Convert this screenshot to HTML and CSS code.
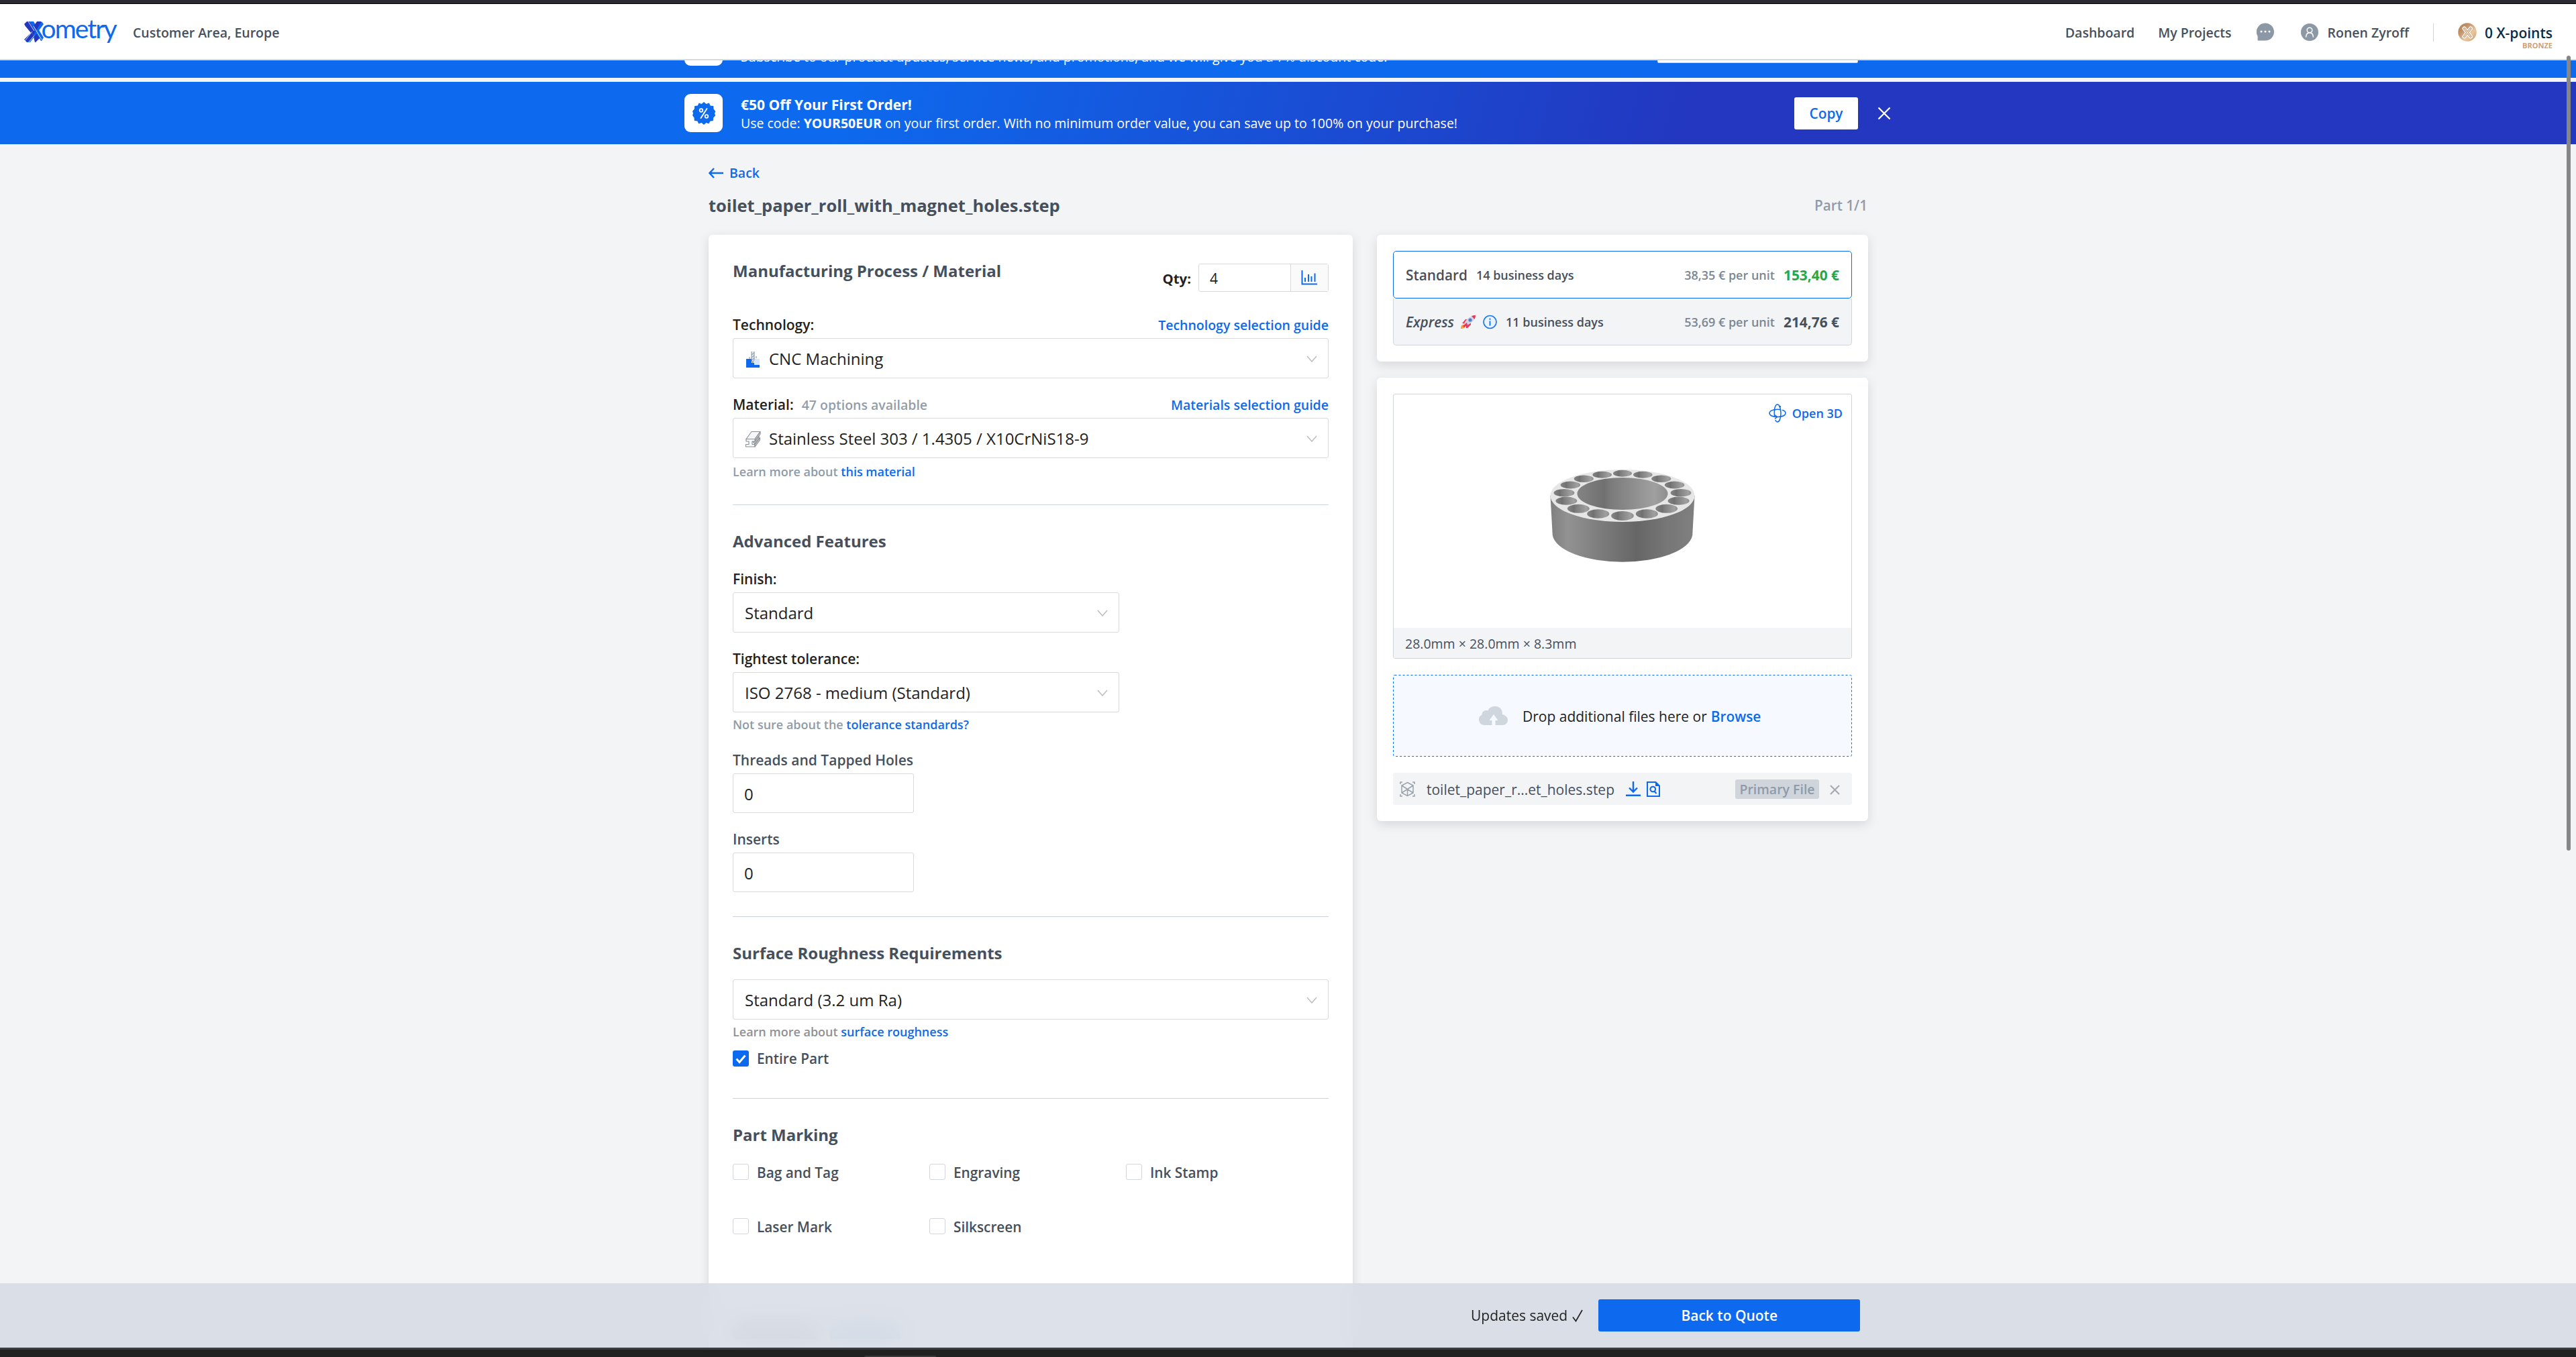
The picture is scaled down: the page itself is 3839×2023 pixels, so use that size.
FILE: index.html
```
<!DOCTYPE html>
<html lang="en">
<head>
<meta charset="utf-8">
<title>Xometry – Customer Area, Europe</title>
<link rel="stylesheet" href="styles.css">
</head>
<body>
<svg width="0" height="0" class="defs">
  <symbol id="chevron" viewBox="0 0 16 10"><path d="M1 1l7 8 7-8" fill="none" stroke="#bfbfbf" stroke-width="1.6"/></symbol>
</svg>
<div class="app">
  <div class="chrome-top"></div>
  <header class="header">
    <svg class="logo" width="144" height="40" viewBox="0 0 144 40">
      <path d="M2 7l3-4h7l5 8-5 8z" fill="#2337c0"/>
      <path d="M1 5L5 1h4l16 24-7 7h-1L14 20z" fill="#2337c0"/>
      <path d="M9 1h6l15 24-3 5h-1z" fill="#0d6aee"/>
      <path d="M29 5l-3-4h-6l-5 7 4 6z" fill="#2337c0"/>
      <path d="M30 5L27 1 9 31h-4l5 1 5-7z" fill="#0d6aee"/>
      <path d="M12 17l4 6-7 9H5l-4-4z" fill="#2337c0"/>
      <path d="M16 23L9 32H5" fill="#0d6aee"/>
      <path d="M16 22l-8 10M7 1l9 14M15 8l12 20M13 16l-11 14" stroke="#fff" stroke-width=".8" fill="none"/>
      <text class="logo-text" x="26.500" y="26" textLength="113" lengthAdjust="spacing">ometry</text>
    </svg>
    <span class="area">Customer Area, Europe</span>
    <nav class="nav">
      <span class="nav-dash">Dashboard</span>
      <span class="nav-proj">My Projects</span>
      <svg class="nav-chat" width="26" height="27" viewBox="0 0 26 27"><path d="M13 .5a13 13 0 1 1 0 26H2.500c-1 0-1-1-.9-2V20A13 13 0 0 1 13 .5z" fill="#8c98a6"/><g fill="#fff"><circle cx="7" cy="13" r="1.500"/><circle cx="13" cy="13" r="1.500"/><circle cx="19" cy="13" r="1.500"/></g></svg>
      <svg class="nav-user" width="26" height="26" viewBox="0 0 26 26"><circle cx="13" cy="13" r="13" fill="#8c98a6"/><circle cx="13" cy="10" r="3.800" fill="none" stroke="#fff" stroke-width="1.500"/><path d="M7.500 20.500c.3-4.500 2.500-6.700 5.500-6.700s5.200 2.200 5.500 6.700" fill="none" stroke="#fff" stroke-width="1.500"/></svg>
      <span class="nav-name">Ronen Zyroff</span>
      <span class="nav-sep"></span>
      <svg class="coin" width="28" height="28" viewBox="0 0 28 28">
        <defs><linearGradient id="bz" x1="0" y1="0" x2="1" y2="1"><stop offset="0" stop-color="#b98355"/><stop offset=".3" stop-color="#c08f66"/><stop offset=".65" stop-color="#eac69c"/><stop offset="1" stop-color="#c89a6c"/></linearGradient></defs>
        <circle cx="14" cy="14" r="13.700" fill="url(#bz)"/>
        <path d="M9.500 8.500l9.500 12M19 8.500l-9.500 12" stroke="#fff" stroke-width="6" stroke-linecap="round"/>
        <path d="M9.500 8.500l9.500 12M19 8.500l-9.500 12" stroke="#cf9f75" stroke-width="3.400" stroke-linecap="round"/>
        <path d="M9.500 8.500l9.500 12M19 8.500l-9.500 12" stroke="#fff" stroke-width="1"/>
      </svg>
      <span class="points">0 X-points<small>BRONZE</small></span>
    </nav>
  </header>

  <main class="scroll">
    <section class="banner banner-news">
      <div class="banner-icon"></div>
      <div class="banner-text"><span>Subscribe to our product updates, service news, and promotions, and we will give you a 7% discount code!</span></div>
      <div class="banner-input"></div>
    </section>
    <section class="banner banner-promo">
      <div class="banner-icon">
        <svg width="34" height="36" viewBox="0 0 34 36"><path d="M17 1l3.500 3 4.200-1.500 2 4 4.500.6.3 4.500 3 3.400L33 18l1.200 3.300-3 3.200-.4 4.400-4.500.8-2 3.900L20.500 32 17 35l-3.500-3-4.200 1.600-2-4-4.500-.7-.3-4.500L0 21l1-3-1-3.200 2.800-3.300.4-4.400 4.500-.7 1.900-4L13.500 4z" fill="#0d6aee"/><path d="M21.500 11L12.500 25" stroke="#fff" stroke-width="1.900" stroke-linecap="round"/><circle cx="13" cy="13.500" r="2.300" fill="none" stroke="#fff" stroke-width="1.700"/><circle cx="21" cy="22.500" r="2.300" fill="none" stroke="#fff" stroke-width="1.700"/></svg>
      </div>
      <div class="banner-text"><b>€50 Off Your First Order!</b><span>Use code: <strong>YOUR50EUR</strong> on your first order. With no minimum order value, you can save up to 100% on your purchase!</span></div>
      <button class="copy">Copy</button>
      <svg class="banner-close" width="20" height="20" viewBox="0 0 20 20"><path d="M1.500 1.500l17 17M18.500 1.500l-17 17" stroke="#fff" stroke-width="2.300"/></svg>
    </section>

    <div class="page">
      <a class="back"><svg width="22" height="16" viewBox="0 0 22 16"><path d="M8 1L1.500 8 8 15M1.500 8H22" fill="none" stroke="#0d6aee" stroke-width="2.400"/></svg>Back</a>
      <div class="title-row"><h1>toilet_paper_roll_with_magnet_holes.step</h1><span class="part-no">Part 1/1</span></div>

      <div class="columns">
        <section class="card form">
          <div class="form-head">
            <h2>Manufacturing Process / Material</h2>
            <div class="qty"><span class="qty-label">Qty:</span><div class="qty-box"><span class="qty-val">4</span><span class="qty-btn"><svg width="24" height="22" viewBox="0 0 24 22"><path d="M1.500 0v20.500H24" fill="none" stroke="#0d6aee" stroke-width="2"/><path d="M6 17v-6M11 17V6M15.500 17V9M20.500 17V4.500" stroke="#0d6aee" stroke-width="2"/></svg></span></div></div>
          </div>

          <div class="row m34"><span class="label dark">Technology:</span><a class="guide">Technology selection guide</a></div>
          <div class="select">
            <svg class="opt-icon" width="24" height="26" viewBox="0 0 24 26"><path d="M2 12h8v6h6v-6h6v13H2z" fill="#0d6aee"/><path d="M14 12h8v9h-8z" fill="#d5e6fd"/><path d="M2 21h20v3.500H2z" fill="#0d6aee"/><path d="M10 1h4v12l-2 5-2-5z" fill="#e3e8ee"/><path d="M10 1v12l2 5 2-5V1M10 6l4-3M10 10l4-3M10 14l4-3M7 9v3M17 8v3" fill="none" stroke="#7f8fa3" stroke-width="1"/></svg>
            <span>CNC Machining</span><svg class="chev" width="16" height="10"><use href="#chevron"/></svg></div>

          <div class="row m24"><span class="label dark">Material:<em>47 options available</em></span><a class="guide">Materials selection guide</a></div>
          <div class="select">
            <svg class="opt-icon" width="24" height="26" viewBox="0 0 24 26"><g fill="#f6f7f8" stroke="#8b8e92" stroke-width="1.100" stroke-linejoin="round"><path d="M10 1.500h13l-8 11H2z"/><path d="M23 1.500V5l-8 11v-3.500z" fill="#c9ccce"/><path d="M11 15.500l4 .5 6-8v4l-6 8z" fill="#bcbfc1"/><path d="M2 12.500h13V16h-4v4.500h4V24H1.500v-3.500H6V16H2z"/><path d="M15 20.500l7.500-10V14L15 24z" fill="#c9ccce"/></g></svg>
            <span>Stainless Steel 303 / 1.4305 / X10CrNiS18-9</span><svg class="chev" width="16" height="10"><use href="#chevron"/></svg></div>
          <p class="hint m5">Learn more about <a>this material</a></p>
          <hr class="m34">

          <h2 class="m39">Advanced Features</h2>
          <div class="row m26"><span class="label dark">Finish:</span></div>
          <div class="select half"><span>Standard</span><svg class="chev" width="16" height="10"><use href="#chevron"/></svg></div>
          <div class="row m24"><span class="label dark">Tightest tolerance:</span></div>
          <div class="select half"><span>ISO 2768 - medium (Standard)</span><svg class="chev" width="16" height="10"><use href="#chevron"/></svg></div>
          <p class="hint m3">Not sure about the <a>tolerance standards?</a></p>
          <div class="row m23"><span class="label">Threads and Tapped Holes</span></div>
          <div class="input">0</div>
          <div class="row m24"><span class="label">Inserts</span></div>
          <div class="input">0</div>
          <hr class="m36">

          <h2 class="m39">Surface Roughness Requirements</h2>
          <div class="select m24"><span>Standard (3.2 um Ra)</span><svg class="chev" width="16" height="10"><use href="#chevron"/></svg></div>
          <p class="hint m3 neutral">Learn more about <a>surface roughness</a></p>
          <div class="check entire"><i class="box on"><svg width="24" height="24" viewBox="0 0 24 24"><path d="M5.500 12.500l4.500 5 8.500-10" fill="none" stroke="#fff" stroke-width="3"/></svg></i>Entire Part</div>
          <hr class="m44">

          <h2 class="m39">Part Marking</h2>
          <div class="checks">
            <div class="check"><i class="box"></i>Bag and Tag</div>
            <div class="check"><i class="box"></i>Engraving</div>
            <div class="check"><i class="box"></i>Ink Stamp</div>
            <div class="check"><i class="box"></i>Laser Mark</div>
            <div class="check"><i class="box"></i>Silkscreen</div>
          </div>
          <div class="below"><i class="below-a"></i><i class="below-b"></i></div>
        </section>

        <aside class="side">
          <section class="card side-card">
            <div class="speed active"><span class="speed-name">Standard</span><span class="days">14 business days</span><span class="unit">38,35 € per unit</span><b>153,40 €</b></div>
            <div class="speed"><span class="speed-name express">Express</span>
              <svg class="rocket" width="24" height="22" viewBox="0 0 24 22"><path d="M1 21c0-4 1-6 4-6l3 2c-.5 3-3 4-7 4z" fill="#f8a23c"/><path d="M3 13l5-6h5l-4 7z" fill="#e8365f"/><path d="M9 20l-1-6 8-5v6l-5 5z" fill="#e8365f"/><path d="M6 13c3-6 8-11 17-12-1 7-6 12-13 15z" fill="#cfd6e0"/><path d="M17 2c2-.8 4-1 6-1-.1 2-.6 4-1.500 6z" fill="#f0315b"/><circle cx="15" cy="8" r="2.600" fill="#4f7fd0"/><path d="M4 17l6-5 1 3-5 4z" fill="#ef2f5c"/></svg>
              <svg class="info" width="21" height="22" viewBox="0 0 21 22"><circle cx="10.500" cy="11" r="9.500" fill="#e8f3ff" stroke="#1677ee" stroke-width="1.700"/><path d="M10.500 9.500v7M10.500 5.500v2.200" stroke="#1677ee" stroke-width="1.900"/></svg>
              <span class="days">11 business days</span><span class="unit">53,69 € per unit</span><b>214,76 €</b></div>
          </section>

          <section class="card side-card">
            <div class="viewer">
              <div class="viewer-body">
                <svg class="part" width="220" height="148" viewBox="0 0 220 148">
                  <defs>
                    <linearGradient id="wall"><stop offset="0" stop-color="#7f7f7f"/><stop offset=".12" stop-color="#929292"/><stop offset=".35" stop-color="#7c7c7c"/><stop offset=".6" stop-color="#666"/><stop offset=".8" stop-color="#767676"/><stop offset="1" stop-color="#808080"/></linearGradient>
                    <linearGradient id="bore"><stop offset="0" stop-color="#848484"/><stop offset=".3" stop-color="#707070"/><stop offset=".36" stop-color="#7a7a7a"/><stop offset=".85" stop-color="#a0a0a0"/><stop offset="1" stop-color="#8e8e8e"/></linearGradient>
                  </defs>
                  <path d="M2.500 42l3.300 59a104.500 43 0 0 0 208.400 0l3.300-59z" fill="url(#wall)"/>
                  <ellipse cx="110" cy="42" rx="107.500" ry="39" fill="#e6e6e6"/>
                  <ellipse cx="110" cy="39" rx="67.500" ry="24" fill="url(#bore)"/>
                  <g fill="url(#bore)">
                    <ellipse cx="110" cy="8.700" rx="14" ry="5"/>
                    <ellipse cx="140.300" cy="10.700" rx="14.300" ry="5"/><ellipse cx="79.700" cy="10.700" rx="14.300" ry="5"/>
                    <ellipse cx="167.700" cy="16.700" rx="14.600" ry="5.200"/><ellipse cx="52.300" cy="16.700" rx="14.600" ry="5.200"/>
                    <ellipse cx="187.600" cy="26" rx="14.800" ry="5.400"/><ellipse cx="32.400" cy="26" rx="14.800" ry="5.400"/>
                    <ellipse cx="197" cy="37.700" rx="15.400" ry="5.800"/><ellipse cx="23" cy="37.700" rx="15.400" ry="5.800"/>
                    <ellipse cx="193.600" cy="49.700" rx="16" ry="6.100"/><ellipse cx="26.400" cy="49.700" rx="16" ry="6.100"/>
                    <ellipse cx="175.700" cy="61.300" rx="16.400" ry="6.500"/><ellipse cx="44.300" cy="61.300" rx="16.400" ry="6.500"/>
                    <ellipse cx="146.300" cy="69" rx="16.600" ry="6.800"/><ellipse cx="73.700" cy="69" rx="16.600" ry="6.800"/>
                    <ellipse cx="110" cy="72" rx="16.800" ry="6.900"/>
                  </g>
                </svg>
                <a class="open3d"><svg width="26" height="28" viewBox="0 0 26 28" fill="none" stroke="#0d6aee" stroke-width="1.500"><path d="M8.500 8.700C4 9.500 1 11.500 1 14c0 3.200 5 5.500 12 5.500S25 17.200 25 14c0-2.300-2-4-5-4.800"/><path d="M9 19.500C8 17 8 10 9 6c.8-3.500 2.500-5 4-5 3 0 5 6 5 13s-2 13-5 13c-1.300 0-2.400-1-3.200-3"/><path d="M8 9.200c3-1 7-1 9.500-.5M15.500 5l2.500-1.500"/><path d="M9 16.500l3.500 3L9 22.500"/></svg>Open 3D</a>
              </div>
              <div class="viewer-dims">28.0mm × 28.0mm × 8.3mm</div>
            </div>
            <div class="drop">
              <svg class="dash" width="684" height="122"><rect x=".5" y=".5" width="683" height="121" rx="2"/></svg>
              <svg width="43" height="28" viewBox="0 0 43 28"><path d="M8 28a8.200 8.200 0 0 1-3.500-15.500C4.500 8 9 5 13.500 6.500 16-2 31-2 34 6c.8 2 1 4 .8 6C40 13 43 17 43 20.500 43 25 39.500 28 35.500 28H24.500v-7h4L22 12l-6.500 9h4v7z" fill="#d0d6de"/></svg>
              <span>Drop additional files here or</span><a>Browse</a>
            </div>
            <div class="file">
              <svg class="f-cube" width="23" height="23" viewBox="0 0 23 23" fill="none" stroke="#98a3af" stroke-width="1.500"><path d="M11.500 1.500L20 6v11l-8.500 4.500L3 17V6zM3 6l8.500 5.500L20 6M11.500 11.500v10M3 17l8.500-5.500L20 17M1 4V1h3M19 1h3v3M22 19v3h-3M4 22H1v-3"/></svg>
              <span class="f-name">toilet_paper_r...et_holes.step</span>
              <svg class="f-down" width="22" height="23" viewBox="0 0 22 23" fill="none" stroke="#0d6aee" stroke-width="2.400"><path d="M11 0v15M5 9.500l6 6 6-6M0 20.800h22"/></svg>
              <svg class="f-doc" width="20" height="23" viewBox="0 0 20 23" fill="none" stroke="#0d6aee" stroke-width="2.100"><path d="M1 1h12.500L19 6.500V22H1z"/><path d="M13 1l6 6h-6z" fill="#0d6aee" stroke="none"/><circle cx="9.300" cy="11.500" r="3.800"/><path d="M11.500 14.500l3 3.500"/></svg>
              <span class="primary">Primary File</span>
              <svg class="f-x" width="15" height="15" viewBox="0 0 15 15"><path d="M1 1l13 13M14 1L1 14" stroke="#a7abb0" stroke-width="2.200"/></svg>
            </div>
          </section>
        </aside>
      </div>
    </div>

    <div class="footer"><span>Updates saved</span><svg width="16" height="19" viewBox="0 0 16 19"><path d="M1 11.500l4.500 6L15 1" fill="none" stroke="#222" stroke-width="1.700"/></svg><button>Back to Quote</button></div>
  </main>
  <div class="chrome-bottom"><i></i></div>
  <div class="scrollbar"></div>
</div>
</body>
</html>
```
FILE: styles.css
```
* { box-sizing: border-box; }
body { margin: 0; font-family: "Open Sans", "Noto Sans", sans-serif; font-size: 21px; line-height: 30px; color: #46505c; background: #f3f4f6; }
h1, h2, p { margin: 0; }
svg { display: block; flex: none; }
i { font-style: normal; }
a { color: #0d6aee; font-weight: 600; }
button { border: 0; font: inherit; font-weight: 600; padding: 0; }
.defs { position: absolute; }

.app { position: relative; display: flex; flex-direction: column; width: 3839px; height: 2023px; overflow: hidden; }
.chrome-top { height: 6px; background: #2b2a33; border-bottom: 1px solid #000; flex: none; }

.header { display: flex; align-items: center; height: 84px; padding: 0 35px; background: #fff; border-bottom: 2px solid #d6dadd; flex: none; font-size: 19.5px; font-weight: 600; }
.logo { margin-top: 8px; overflow: visible; }
.logo-text { font: 400 39px Lato, sans-serif; fill: #0d6aee; }
.area { margin-left: 19px; margin-top: 3px; }
.nav { display: flex; align-items: center; margin-left: auto; margin-top: 3px; }
.nav-proj { margin-left: 35px; }
.nav-chat { margin-left: 37px; margin-top: -2px; }
.nav-user { margin-left: 40px; margin-top: -2px; }
.nav-name { margin-left: 14px; }
.nav-sep { width: 1px; height: 27px; margin: -1px 36px 0 36px; background: #cfd3d8; }
.coin { margin-top: -2px; }
.points { position: relative; margin-left: 12px; font-size: 21px; color: #0b2c47; }
.points small { position: absolute; right: 0; top: 27px; font-size: 11px; line-height: 14px; font-weight: 700; color: #cf9f75; }

.scroll { position: relative; flex: 1; min-height: 0; overflow: hidden; }
.banner { display: flex; align-items: center; height: 93px; padding-left: 1020px; color: #fff; background: #0d6aee; }
.banner-news { margin-top: -67px; margin-bottom: 6px; }
.banner-promo { background: linear-gradient(106deg, #0d6aee 32.5%, #2337c0 65.5%); }
.banner-icon { display: flex; align-items: center; justify-content: center; width: 57px; height: 57px; border-radius: 9px; background: #fff; }
.banner-text { display: flex; flex-direction: column; justify-content: flex-end; width: 1366px; height: 54px; margin-left: 27px; margin-top: 2px; font-size: 19.5px; line-height: 27px; }
.banner-text b { font-size: 21px; }
.banner-input { width: 299px; height: 48px; background: #fff; border: 1px solid #c9ced4; border-radius: 2px; }
.banner-promo .copy { width: 95px; height: 48px; margin-left: 204px; border-radius: 3px; background: #fff; color: #0d6aee; font-size: 20.8px; }
.banner-close { margin-left: 29px; }

.page { padding-top: 28px; margin-left: 1056px; width: 1728px; }
.back { display: flex; align-items: center; gap: 9px; font-size: 19.5px; height: 30px; }
.title-row { display: flex; justify-content: space-between; margin-top: 18px; height: 30px; }
h1 { font-size: 25.5px; line-height: 30px; font-weight: 700; }
.part-no { color: #909ba8; font-weight: 600; font-size: 20.7px; margin-right: 1px; }
.columns { display: flex; align-items: flex-start; gap: 36px; margin-top: 29px; }
.card { background: #fff; border-radius: 6px; box-shadow: 0 5px 16px rgba(40, 45, 50, .14); }
.form { width: 960px; height: 1700px; padding: 39px 36px 0; }
.form-head { display: flex; justify-content: space-between; height: 46px; }
h2 { font-size: 24px; line-height: 30px; font-weight: 700; }
.qty { display: flex; align-items: center; height: 42px; margin-top: 4px; gap: 11px; }
.qty-label { font-weight: 700; font-size: 20.4px; color: #222; padding-top: 1px; }
.qty-box { display: flex; width: 194px; height: 42px; border: 1px solid #d9d9d9; border-radius: 3px; }
.qty-val { flex: 1; padding-left: 16px; line-height: 43px; font-size: 21px; color: #222; }
.qty-btn { display: flex; align-items: center; justify-content: center; width: 56px; padding-right: 1px; border-left: 1px solid #d9d9d9; background: #fafafa; }
.row { display: flex; justify-content: space-between; height: 30px; margin-bottom: 5px; line-height: 31px; }
.label { font-weight: 600; }
.dark { color: #222; }
.label em { font-style: normal; font-size: 19.5px; color: #929da9; margin-left: 12px; }
.guide { font-size: 19.5px; }
.select { display: flex; align-items: center; height: 60px; padding: 0 16px 0 17px; border: 1px solid #d9d9d9; border-radius: 3px; font-size: 24px; color: #222; }
.select span { padding-top: 2px; }
.half { width: 576px; }
.chev { margin-left: auto; margin-top: 1px; }
.opt-icon { margin-right: 12px; margin-top: 4px; }
.hint { height: 30px; font-size: 18px; font-weight: 600; color: #909ba8; }
.neutral { color: #919191; }
hr { height: 1px; border: 0; background: #cfd3da; margin: 0; }
.input { width: 270px; height: 59px; padding-left: 16px; line-height: 60px; border: 1px solid #d9d9d9; border-radius: 3px; font-size: 24px; color: #222; }
.m3 { margin-top: 3px; } .m5 { margin-top: 5px; } .m23 { margin-top: 23px; } .m24 { margin-top: 24px; } .m26 { margin-top: 26px; }
.m34 { margin-top: 34px; } .m36 { margin-top: 36px; } .m39 { margin-top: 39px; } .m44 { margin-top: 44px; }
.check { display: flex; align-items: center; height: 30px; gap: 12px; font-weight: 600; font-size: 20.8px; }
.box { width: 24px; height: 24px; border: 1px solid #d3d6da; border-radius: 3px; margin-top: -2px; }
.box.on { border: 0; background: #0d6aee; margin-top: 0; }
.entire { margin-top: 10px; }
.checks { display: grid; grid-template-columns: repeat(3, 293px); row-gap: 51px; margin-top: 26px; }
.below { display: flex; gap: 20px; margin-top: 130px; }
.below-a { width: 125px; height: 22px; background: #cdd1d8; }
.below-b { width: 105px; height: 22px; background: #c9e1f3; }

.side { display: flex; flex-direction: column; gap: 24px; width: 732px; }
.side-card { padding: 24px; }
.speed { display: flex; align-items: center; height: 70px; padding: 0 18px; border: 1px solid #d0d5dc; border-top: 0; border-radius: 0 0 5px 5px; background: #f3f4f6; }
.speed.active { height: 71px; background: #fff; border: 1px solid #0d6aee; border-radius: 5px; }
.speed-name { font-weight: 600; font-size: 20.8px; }
.express { font-style: italic; }
.rocket { margin-left: 9px; }
.info { margin-left: 10px; }
.days { margin-left: 13px; font-size: 18px; font-weight: 600; }
.unit { margin-left: auto; margin-right: 13px; font-size: 18px; font-weight: 600; color: #7b8794; }
.speed b { font-size: 20.9px; }
.active b { color: #28a745; }

.viewer { height: 395px; border: 1px solid #d0d5dc; border-radius: 3px; overflow: hidden; }
.viewer-body { position: relative; display: flex; align-items: center; justify-content: center; height: 348px; }
.part { margin-top: 18px; }
.open3d { position: absolute; top: 13px; right: 13px; display: flex; align-items: center; gap: 9px; height: 28px; font-size: 18px; line-height: 28px; padding-top: 1px; }
.viewer-dims { height: 46px; padding-left: 17px; line-height: 47px; font-size: 19.5px; background: #f3f4f6; }
.drop { position: relative; display: flex; align-items: center; height: 122px; margin-top: 24px; padding-left: 128px; background: #f6f9ff; color: #222; }
.drop span { margin-left: 22px; margin-right: 6px; padding-top: 2px; }
.drop a { padding-top: 2px; font-size: 20.8px; }
.dash { position: absolute; left: 0; top: 0; }
.dash rect { fill: none; stroke: #0d6aee; stroke-width: 1; stroke-dasharray: 3 3; }
.file { display: flex; align-items: center; height: 48px; margin-top: 24px; padding-left: 10px; border-radius: 3px; background: #f3f4f6; }
.f-name { margin-left: 17px; padding-top: 1px; }
.f-down { margin-left: 17px; }
.f-doc { margin-left: 9px; }
.primary { width: 125px; height: 29px; margin-left: auto; margin-right: 16px; line-height: 29px; text-align: center; font-weight: 600; font-size: 19.5px; color: #8f9aa7; background: #d0d5dc; border-radius: 3px; }
.f-x { margin-right: 18px; margin-top: 2px; }

.footer { position: absolute; left: 0; right: 0; bottom: 0; display: flex; align-items: center; height: 96px; padding-left: 2192px; background: rgba(210, 215, 225, .75); backdrop-filter: blur(18px); color: #222; }
.footer svg { margin-left: 7px; }
.footer button { width: 390px; height: 48px; margin-left: 23px; border-radius: 3px; color: #fff; background: #0d6aee; }
.chrome-bottom { height: 14px; flex: none; background: #212121; border-top: 3px solid #3d3d3d; display: flex; align-items: flex-end; }
.chrome-bottom i { width: 107px; height: 2px; margin-left: 1288px; background: #3a3a3a; border-radius: 4px 4px 0 0; }
.scrollbar { position: absolute; left: 3825px; top: 83px; width: 6px; height: 1185px; border-radius: 3px; background: #868686; }
```
